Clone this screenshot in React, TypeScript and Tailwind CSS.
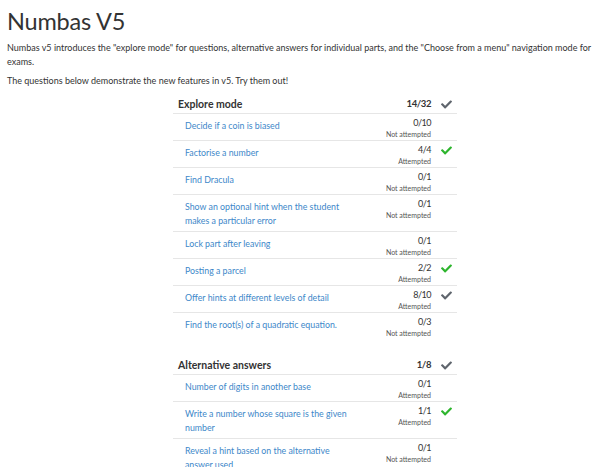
import { FaCheck } from "react-icons/fa";

type Question = {
  title: string;
  score: string;
  status: string;
  mark?: "full" | "partial";
};

type Group = {
  name: string;
  score: string;
  questions: Question[];
};

const groups: Group[] = [
  {
    name: "Explore mode",
    score: "14/32",
    questions: [
      { title: "Decide if a coin is biased", score: "0/10", status: "Not attempted" },
      { title: "Factorise a number", score: "4/4", status: "Attempted", mark: "full" },
      { title: "Find Dracula", score: "0/1", status: "Not attempted" },
      {
        title: "Show an optional hint when the student makes a particular error",
        score: "0/1",
        status: "Not attempted",
      },
      { title: "Lock part after leaving", score: "0/1", status: "Not attempted" },
      { title: "Posting a parcel", score: "2/2", status: "Attempted", mark: "full" },
      { title: "Offer hints at different levels of detail", score: "8/10", status: "Attempted", mark: "partial" },
      { title: "Find the root(s) of a quadratic equation.", score: "0/3", status: "Not attempted" },
    ],
  },
  {
    name: "Alternative answers",
    score: "1/8",
    questions: [
      { title: "Number of digits in another base", score: "0/1", status: "Attempted" },
      { title: "Write a number whose square is the given number", score: "1/1", status: "Attempted", mark: "full" },
      { title: "Reveal a hint based on the alternative answer used", score: "0/1", status: "Not attempted" },
    ],
  },
];

const Mark = ({ mark }: { mark?: "full" | "partial" }) => {
  if (!mark) return null;
  return (
    <FaCheck
      className={mark === "full" ? "text-[#2db52d]" : "text-[#5f656d]"}
      size={11}
    />
  );
};

const GroupTable = ({ group }: { group: Group }) => (
  <div className="w-[284px]">
    <div className="flex items-start border-b border-[#e6e6e6] pl-[5px] pt-[1px] pb-[2px] font-bold text-[#333]">
      <span className="flex-1 text-[10.5px] leading-[14px]">{group.name}</span>
      <span className="text-[9.5px] leading-[14px] tracking-[-0.4px]">{group.score}</span>
      <span className="flex w-[26px] pl-[10px] pt-[2px]">
        <Mark mark="partial" />
      </span>
    </div>
    {group.questions.map((q, i) => (
      <div
        key={q.title}
        className={`flex items-start ${i < group.questions.length - 1 ? "border-b border-[#e6e6e6]" : ""}`}
      >
        <div className="w-[182px] pl-[12px] pt-[5px] pb-[3px] text-[8.8px] leading-[14px] text-[#3d87c9]">
          {q.title}
        </div>
        <div className="flex flex-1 flex-col items-end pt-[3px] pb-[1px]">
          <span className="text-[9px] leading-[12px] tracking-[-0.5px] text-[#333]">{q.score}</span>
          <span className="text-[7px] leading-[10px] text-[#555]">{q.status}</span>
        </div>
        <div className="flex w-[26px] pl-[10px] pt-[4px]">
          <Mark mark={q.mark} />
        </div>
      </div>
    ))}
  </div>
);

export default function App() {
  return (
    <div className="min-h-screen bg-white px-[7px] font-['Lato','Liberation_Sans',sans-serif] text-[#333]">
      <h1 className="pt-[4px] text-[23.5px] leading-[34px] tracking-[-0.2px] text-[#333]">Numbas V5</h1>
      <p className="mt-[3px] text-[9px] leading-[14px]">
        Numbas v5 introduces the "explore mode" for questions, alternative answers for individual parts, and the
        "Choose from a menu" navigation mode for exams.
      </p>
      <p className="mt-[5px] text-[9px] leading-[14px]">
        The questions below demonstrate the new features in v5. Try them out!
      </p>
      <div className="ml-[166px] mt-[8px] flex flex-col gap-[18px]">
        {groups.map((g) => (
          <GroupTable key={g.name} group={g} />
        ))}
      </div>
    </div>
  );
}
